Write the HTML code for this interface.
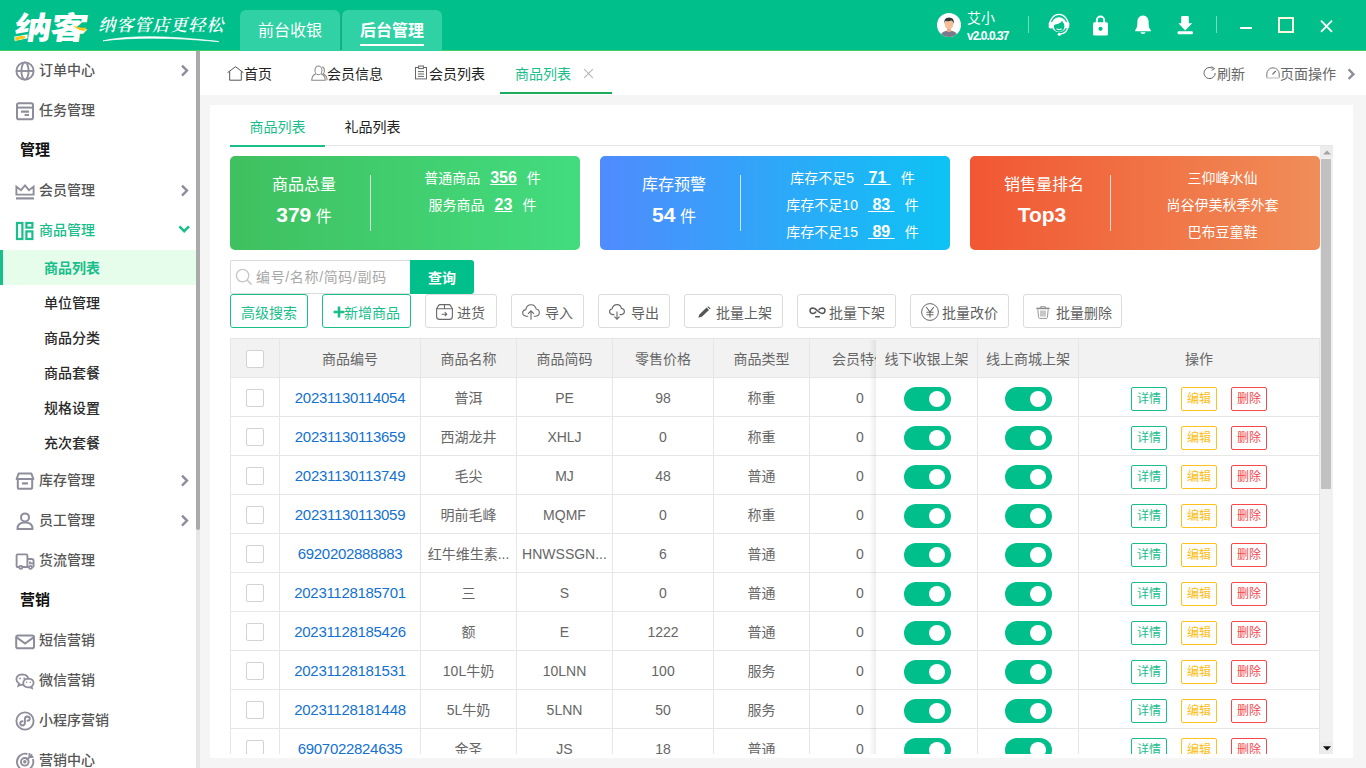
<!DOCTYPE html>
<html lang="zh-CN">
<head>
<meta charset="utf-8">
<title>纳客 - 商品列表</title>
<style>
*{box-sizing:border-box;margin:0;padding:0}
html,body{width:1366px;height:768px;overflow:hidden;background:#f5f5f5;font-family:"Liberation Sans","Noto Sans CJK SC",sans-serif;font-size:14px;color:#333}
a{text-decoration:none;color:inherit}
svg{display:block}
.abs{position:absolute}
/* ---------- top bar ---------- */
#top{position:absolute;left:0;top:0;width:1366px;height:51px;background:#00bf8b;border-bottom:1px solid #41cf66;color:#fff}
#logo{position:absolute;left:12px;top:7px;font-family:"Noto Sans CJK SC","Liberation Sans",sans-serif;font-weight:900;font-size:31px;line-height:38px;letter-spacing:-1px;color:#fff;transform:skewX(-9deg) scaleX(1.205);transform-origin:0 100%;white-space:nowrap}
#slogan{position:absolute;left:100px;top:11px;font-family:"Noto Serif CJK SC","Liberation Serif",serif;font-weight:600;font-size:17px;line-height:26px;letter-spacing:1px;color:#fff;transform:skewX(-14deg);white-space:nowrap}
.ttab{position:absolute;top:10px;height:41px;width:100px;background:#30d1a5;border-radius:6px 6px 0 0;text-align:center;font-size:16px;line-height:42px;color:#fff}
.ttab.on{font-weight:bold}
.ttab.on i{position:absolute;left:18px;top:34px;width:64px;height:2px;background:#fff}
#user{position:absolute;left:937px;top:13px;width:24px;height:24px}
#uname{position:absolute;left:967px;top:9px;font-size:14px;line-height:18px;color:#fff}
#uver{position:absolute;left:967px;top:28px;font-size:12px;line-height:16px;font-weight:bold;letter-spacing:-0.95px;color:#fff}
.tsep{position:absolute;top:16px;width:1px;height:17px;background:rgba(255,255,255,.45)}
.tico{position:absolute;top:13px;width:24px;height:24px}
/* ---------- sidebar ---------- */
#side{position:absolute;left:0;top:51px;width:196px;height:717px;background:#fff;overflow:hidden}
#sbar{position:absolute;left:196px;top:51px;width:4px;height:717px;background:#e6e6e6}
#sbar i{position:absolute;left:0;top:0;width:4px;height:479px;background:#aaa;border-radius:0 0 2px 2px}
.mi{position:absolute;left:0;width:196px;height:40px;line-height:40px;font-size:14px;font-weight:500;color:#555;padding-left:39px}
.mi svg.ic{position:absolute;left:14px;top:10px;width:22px;height:22px}
.mi svg.ch{position:absolute;left:178px;top:13px;width:12px;height:14px}
.mh{position:absolute;left:20px;height:40px;line-height:40px;font-size:15px;font-weight:bold;color:#111}
.mi.g{color:#19be8b}
.si{position:absolute;left:0;width:196px;height:35px;line-height:37px;font-size:14px;font-weight:500;color:#2a2a2a;padding-left:44px}
.si.on{background:#e7fdec;font-weight:bold;color:#19be8b;border-left:3px solid #19be8b;padding-left:41px}

/* ---------- page tabs ---------- */
#tabs{position:absolute;left:200px;top:51px;width:1166px;height:44px;background:#fff;font-size:14px;color:#222}
#tabs .t{position:absolute;top:0;height:44px;line-height:47px;white-space:nowrap}
#tabs .t svg{position:absolute;top:14px}
#tabs .on{color:#19be8b}
#tabs .ul{position:absolute;left:300px;top:41px;width:112px;height:2px;background:#1daa5a}
#tabs .r{color:#666;line-height:47px}
/* ---------- card ---------- */
#card{position:absolute;left:210px;top:105px;width:1143px;height:653px;background:#fff}
#itabs{position:absolute;left:20px;top:0;width:1103px;height:41px;border-bottom:1px solid #e6e6e6;font-size:14px}
#itabs span{position:absolute;top:0;height:42px;line-height:44px;text-align:center;width:95px}
#itabs .on{color:#19be8b;border-bottom:2px solid #19be8b}
#scroll{position:absolute;left:20px;top:41px;width:1090px;height:608px;overflow:hidden}
#vbar{position:absolute;left:1110px;top:41px;width:13px;height:608px;background:#f1f1f1}
#vbar .b{position:absolute;left:0;width:13px;height:12px;background:#ececec}
#vbar .th{position:absolute;left:1px;top:13px;width:10px;height:330px;background:#c1c1c1}
.stat{position:absolute;top:10px;width:350px;height:94px;border-radius:5px;color:#fff}
.stat .l{position:absolute;left:0;top:0;width:148px;text-align:center}
.stat .l b{display:block;font-weight:normal;font-size:16px;line-height:22px;margin-top:18px}
.stat .l em{display:block;font-style:normal;font-size:16px;line-height:30px;margin-top:4px}
.stat .l em strong{font-size:21px;font-weight:bold}
.stat .dv{position:absolute;left:140px;top:19px;width:1px;height:56px;background:rgba(255,255,255,.75)}
.stat .r{position:absolute;left:155px;top:9px;width:195px;text-align:center;font-size:14px;line-height:26.8px;white-space:nowrap}
.stat .r u{font-weight:bold;font-size:16px;margin:0 10px}

/* ---------- tools ---------- */
#sbox{position:absolute;left:0;top:114px;width:180px;height:34px;border:1px solid #dcdcdc;border-right:0;border-radius:2px 0 0 2px;background:#fff;padding-left:25px;line-height:32px;font-size:14px;letter-spacing:.65px;color:#a8a8a8;white-space:nowrap}
#sbox svg{position:absolute;left:4px;top:7px}
#sbtn{position:absolute;left:180px;top:114px;width:64px;height:34px;background:#00bf8b;color:#fff;font-weight:bold;font-size:14px;line-height:36px;text-align:center;border-radius:0 3px 3px 0}
.btn{position:absolute;top:148px;height:34px;border:1px solid #dcdcdc;border-radius:3px;background:#fff;font-size:14px;line-height:36px;color:#5f5f5f;white-space:nowrap}
.btn svg{position:absolute}
.btn span{position:absolute;top:0}
.btn.g{border-color:#19be8b;color:#19be8b;text-align:center}
/* ---------- table ---------- */
#tb{position:absolute;left:0;top:192px;width:1090px;height:430px;border-left:1px solid #e6e6e6;border-top:1px solid #e6e6e6;font-size:14px;color:#666}
.tr{position:absolute;left:0;width:1089px;height:39px;border-bottom:1px solid #e6e6e6}
.tr.h{background:#f2f2f2}
.td{position:absolute;top:0;height:38px;line-height:40px;text-align:center;border-right:1px solid #e6e6e6;white-space:nowrap;overflow:hidden}
.td a{color:#1271d1;font-size:15px;letter-spacing:-.3px}
.cb{position:absolute;left:15px;top:11px;width:18px;height:18px;border:1px solid #d2d2d2;border-radius:2px;background:#fff}
#fix{position:absolute;left:646px;top:192px;width:444px;height:430px;background:#fff;border-top:1px solid #e6e6e6;font-size:14px;color:#666}
#fix:before{content:"";position:absolute;left:-7px;top:1px;width:7px;height:430px;background:linear-gradient(90deg,rgba(0,0,0,0),rgba(0,0,0,.07))}
#fix .tr{width:444px}
.sw{position:absolute;left:27px;top:9px;width:47px;height:24px;border-radius:12px;background:#00bf8b}
.sw i{position:absolute;left:25px;top:4px;width:16px;height:16px;border-radius:8px;background:#fff}
.ab{position:absolute;top:9px;width:36px;height:24px;border:1px solid;border-radius:2px;font-size:12px;line-height:23px;text-align:center}
.ab.d{left:52px;color:#19be8b;border-color:#19be8b}
.ab.e{left:102px;color:#fbbd12;border-color:#ffc21c}
.ab.x{left:152px;color:#f4484c;border-color:#f5494d}
</style>
</head>
<body>
<div id="top">
  <div id="logo">纳客</div>
  <svg class="abs" style="left:12px;top:24px" width="80" height="20" viewBox="0 0 80 20"><path d="M3 13.4 Q8 11.4 13.6 12.2 L12.8 14.4 Q8 14.6 3.6 17.2 Z" fill="#fcc419"/><path d="M61.4 1.6 Q67 4.6 74 3.4 L73.2 6.6 Q66.4 7.6 61.4 1.6 Z" fill="#fcc419"/></svg>
  <div id="slogan">纳客管店更轻松</div>
  <svg class="abs" style="left:100px;top:33px" width="125" height="12" viewBox="0 0 125 12"><path d="M3 7.8 Q42 -0.8 119 8.6 Q48 2.2 3 7.8 Z" fill="#fff" stroke="#fff" stroke-width=".7"/></svg>
  <div class="ttab" style="left:240px">前台收银</div>
  <i class="abs" style="left:340px;top:12px;width:2px;height:38px;background:linear-gradient(90deg,#1bb88c,#0fa77b)"></i>
  <div class="ttab on" style="left:342px">后台管理<i></i></div>
  <svg id="user" viewBox="0 0 24 24"><defs><clipPath id="uc"><circle cx="12" cy="12" r="12"/></clipPath></defs><g clip-path="url(#uc)"><rect width="24" height="24" fill="#fff"/><path d="M3 24 Q4 17.5 12 17.5 Q20 17.5 21 24 Z" fill="#7b7a8b"/><rect x="10.2" y="14" width="3.6" height="5" fill="#eaa27f"/><ellipse cx="12" cy="11.2" rx="4.3" ry="5" fill="#f7bd98"/><path d="M7.2 11 Q6.6 4.6 12 4.6 Q17.6 4.6 16.8 11 Q16 8.2 14.6 7.6 Q11 9 8.6 7.8 Q7.6 8.6 7.2 11 Z" fill="#33363b"/></g></svg>
  <div id="uname">艾小</div>
  <div id="uver">v2.0.0.37</div>
  <i class="tsep" style="left:1028px"></i>
  <svg class="tico" style="left:1047px" viewBox="0 0 24 24"><path d="M2.8 12 A9.2 10.6 0 0 1 21.2 12" fill="none" stroke="#fff" stroke-width="1.3"/><circle cx="12" cy="11.7" r="7.5" fill="#fff"/><rect x="1.7" y="8.8" width="3.8" height="6.6" rx="1.6" fill="#fff"/><rect x="18.5" y="8.8" width="3.8" height="6.6" rx="1.6" fill="#fff"/><path d="M6.9 13.4 Q6.8 11.6 8.4 11.4 Q11.6 11.4 13.6 9.6 Q14.6 8.8 14.8 7.8 Q17.6 10.4 17.4 14 Q16.6 18.7 12.2 18.7 Q7.4 18.5 6.9 13.4 Z" fill="#00bf8b"/><path d="M9.6 16 Q12.2 17.6 14.8 16 Q12.2 16.9 9.6 16 Z" fill="#fff" stroke="#fff" stroke-width=".7"/><path d="M20.6 15 Q19.4 20.2 13.4 21.2" fill="none" stroke="#fff" stroke-width="1.2"/><ellipse cx="12.3" cy="21.4" rx="1.7" ry="1.3" fill="#fff"/></svg>
  <svg class="tico" style="left:1088px" viewBox="0 0 24 24"><path d="M8.8 10 V7.2 A3.7 3.7 0 0 1 16.2 7.2 V10" fill="none" stroke="#fff" stroke-width="1.9"/><rect x="5" y="9.2" width="15" height="13.4" rx="1.5" fill="#fff"/><circle cx="12.5" cy="15.8" r="2.1" fill="#00bf8b"/></svg>
  <svg class="tico" style="left:1131px" viewBox="0 0 24 24"><path d="M12 2.6 C15.8 2.6 17.6 5.6 17.6 9.2 C17.6 14 18.6 15.6 19.8 17 V18.2 H4.2 V17 C5.4 15.6 6.4 14 6.4 9.2 C6.4 5.6 8.2 2.6 12 2.6 Z" fill="#fff"/><path d="M9.4 19.2 H14.6 Q14.2 21 12 21 Q9.8 21 9.4 19.2 Z" fill="#fff"/></svg>
  <svg class="tico" style="left:1173px" viewBox="0 0 24 24"><path d="M9.2 2.9 H14.8 Q15.8 2.9 15.8 3.9 V10.3 H19.2 L12.2 17.4 L5.4 10.3 H8.2 V3.9 Q8.2 2.9 9.2 2.9 Z" fill="#fff"/><rect x="4.6" y="18.3" width="15.3" height="2.9" rx="1" fill="#fff"/></svg>
  <i class="tsep" style="left:1216px"></i>
  <i class="abs" style="left:1240px;top:27px;width:12px;height:2px;background:#fff"></i>
  <i class="abs" style="left:1278px;top:17px;width:16px;height:16px;border:2px solid #fbfbdc"></i>
  <svg class="abs" style="left:1319px;top:19px" width="15" height="15" viewBox="0 0 15 15"><path d="M2 1.6 L13 12.8 M13 1.6 L2 12.8" stroke="#fff" stroke-width="1.8" fill="none"/></svg>
</div>
<div id="side">
  <div class="mi" style="top:-1px"><svg class="ic" viewBox="0 0 22 22"><g fill="none" stroke="#8d8d9c" stroke-width="1.9"><circle cx="11" cy="11" r="8.6"/><ellipse cx="11" cy="11" rx="3.6" ry="8.6"/><path d="M2.4 11 H19.6"/></g></svg>订单中心<svg class="ch" viewBox="0 0 12 14"><path d="M4 2.6 L9 7.6 L4 12.6" fill="none" stroke="#8d8d9c" stroke-width="2.4"/></svg></div>
  <div class="mi" style="top:39px"><svg class="ic" viewBox="0 0 22 22"><g fill="none" stroke="#8d8d9c" stroke-width="2"><rect x="3" y="3.2" width="16" height="16" rx="1.8"/><path d="M3 7.6 H19"/><path d="M7 11.6 H15 M10.6 15 H15" stroke-width="2.2"/></g></svg>任务管理</div>
  <div class="mh" style="top:79px">管理</div>
  <div class="mi" style="top:119px"><svg class="ic" viewBox="0 0 22 22"><g fill="none" stroke="#8d8d9c" stroke-width="1.9"><path d="M2.4 14.6 V6.6 L7 10.2 L11 5.4 L15 10.2 L19.6 6.6 V14.6 Z" stroke-linejoin="miter"/><path d="M2 18.4 H20" stroke-width="2.2"/></g></svg>会员管理<svg class="ch" viewBox="0 0 12 14"><path d="M4 2.6 L9 7.6 L4 12.6" fill="none" stroke="#8d8d9c" stroke-width="2.4"/></svg></div>
  <div class="mi g" style="top:159px"><svg class="ic" viewBox="0 0 22 22"><g fill="none" stroke="#19be8b" stroke-width="2.2"><rect x="3" y="3" width="5.4" height="16"/><rect x="12.4" y="3" width="6" height="4.6"/><rect x="12.4" y="11.4" width="6" height="7.6"/></g></svg>商品管理<svg class="ch" viewBox="0 0 12 14"><path d="M1.4 3.4 L6.2 8.2 L11 3.4" fill="none" stroke="#19be8b" stroke-width="2.5"/></svg></div>
  <div class="si on" style="top:199px">商品列表</div>
  <div class="si" style="top:234px">单位管理</div>
  <div class="si" style="top:269px">商品分类</div>
  <div class="si" style="top:304px">商品套餐</div>
  <div class="si" style="top:339px">规格设置</div>
  <div class="si" style="top:374px">充次套餐</div>
  <div class="mi" style="top:409px"><svg class="ic" viewBox="0 0 22 22"><g fill="none" stroke="#8d8d9c" stroke-width="2"><path d="M2.6 9 L4.6 3.6 H17.4 L19.4 9 Z" stroke-linejoin="round"/><path d="M3.8 9 V17.2 Q3.8 18.8 5.4 18.8 H16.6 Q18.2 18.8 18.2 17.2 V9"/><path d="M8 13.4 H14" stroke-width="2.2"/></g></svg>库存管理<svg class="ch" viewBox="0 0 12 14"><path d="M4 2.6 L9 7.6 L4 12.6" fill="none" stroke="#8d8d9c" stroke-width="2.4"/></svg></div>
  <div class="mi" style="top:449px"><svg class="ic" viewBox="0 0 22 22"><g fill="none" stroke="#8d8d9c" stroke-width="2"><circle cx="11" cy="7.4" r="4"/><path d="M3.4 19 Q3.6 12.6 11 12.6 Q18.4 12.6 18.6 19 Z" stroke-linejoin="round"/></g></svg>员工管理<svg class="ch" viewBox="0 0 12 14"><path d="M4 2.6 L9 7.6 L4 12.6" fill="none" stroke="#8d8d9c" stroke-width="2.4"/></svg></div>
  <div class="mi" style="top:489px"><svg class="ic" viewBox="0 0 22 22"><g fill="none" stroke="#8d8d9c" stroke-width="1.9"><path d="M5 17 H3.6 Q2.6 17 2.6 16 V5.4 Q2.6 4.4 3.6 4.4 H12.4 Q13.4 4.4 13.4 5.4 V17 H8.6"/><path d="M13.4 9 H17.6 Q19.6 9 19.6 11 V16 Q19.6 17 18.6 17 H18.4 M13.4 17 H14.6"/><circle cx="6.8" cy="17.4" r="1.5"/><circle cx="16.5" cy="17.4" r="1.5"/><path d="M16 11.4 V13.4 H19"/></g></svg>货流管理</div>
  <div class="mh" style="top:529px">营销</div>
  <div class="mi" style="top:569px"><svg class="ic" viewBox="0 0 22 22"><g fill="none" stroke="#8d8d9c" stroke-width="2"><rect x="2.2" y="5.6" width="17.8" height="12.6" rx="1.8"/><path d="M3 7.6 L11.1 13.6 L19.2 7.6"/></g></svg>短信营销</div>
  <div class="mi" style="top:609px"><svg class="ic" viewBox="0 0 22 22"><g fill="none" stroke="#8d8d9c" stroke-width="1.8"><path d="M9.6 14.8 Q8.2 15 6.8 14.6 L4.4 15.8 L5 13.6 Q2.4 11.8 2.4 9.2 Q2.4 4.8 8.2 4.4 Q13.4 4.6 14.2 8.4"/><path d="M14.4 8.6 Q19.6 9 19.6 13 Q19.6 15 17.6 16.4 L18 18.2 L16 17.2 Q15 17.5 14.2 17.4 Q9.2 17 9.2 13 Q9.4 9 14.4 8.6 Z"/></g><g fill="#8d8d9c"><circle cx="6" cy="8.4" r=".9"/><circle cx="10.2" cy="8.4" r=".9"/><circle cx="12.6" cy="12.2" r=".8"/><circle cx="16.2" cy="12.2" r=".8"/></g></svg>微信营销</div>
  <div class="mi" style="top:649px"><svg class="ic" viewBox="0 0 22 22"><g fill="none" stroke="#8d8d9c" stroke-width="1.9"><circle cx="11" cy="11" r="8.6"/><path d="M8.6 11.3 Q6.3 11.3 6.2 13.4 Q6.4 15.5 8.5 15.5 Q10.7 15.4 10.9 13.2 V8.8 Q11.1 6.6 13.4 6.5 Q15.7 6.6 15.8 8.7 Q15.7 10.7 13.5 10.8" stroke-linecap="round"/></g></svg>小程序营销</div>
  <div class="mi" style="top:689px"><svg class="ic" viewBox="0 0 22 22"><g fill="none" stroke="#8d8d9c" stroke-width="1.9"><path d="M18.8 9 A8.2 8.2 0 1 1 13.4 4"/><circle cx="10.8" cy="11.8" r="3.8"/><circle cx="10.8" cy="11.8" r=".8" fill="#8d8d9c"/><path d="M12.6 10 L18.2 4.4 M15.4 3 V7 H19.4" stroke-width="1.8"/></g></svg>营销中心</div>
</div>
<div id="sbar"><i></i></div>
<div id="main">
<div id="tabs">
  <div class="t" style="left:28px;padding-left:16px"><svg style="left:-1.4px;top:15.2px" width="17" height="15" viewBox="0 0 17 15"><path d="M0.6 6.7 L8.5 0.7 L16.4 6.7 M2.7 5.4 V14.2 H14.3 V5.4" fill="none" stroke="#555" stroke-width="1"/></svg>首页</div>
  <div class="t" style="left:111px;padding-left:16px"><svg style="left:-0.4px;top:14px" width="17" height="16.5" viewBox="0 0 16 15"><g fill="none" stroke="#888" stroke-width=".95"><ellipse cx="7" cy="4.8" rx="3.3" ry="4.1"/><path d="M4.6 8 Q0.8 9.4 0.7 14.2 H13.4 Q13.4 9.4 9.4 8"/><path d="M10.6 1.4 Q12.8 2.4 12.6 5.6 Q12.4 7.4 11.4 8.2 Q15.2 9.6 15.2 14.2"/></g></svg>会员信息</div>
  <div class="t" style="left:214px;padding-left:15px"><svg style="left:0" width="14" height="15" viewBox="0 0 14 15"><g fill="none" stroke="#666" stroke-width="1"><rect x="1.5" y="2.5" width="11" height="11.4"/><rect x="4.6" y="1" width="4.8" height="2.6" fill="#fff"/><path d="M4 6.6 H10 M4 9 H10 M4 11.4 H10"/></g></svg>会员列表</div>
  <div class="t on" style="left:315px">商品列表</div>
  <svg class="abs" style="left:383px;top:17px" width="11" height="11" viewBox="0 0 11 11"><path d="M1.2 1.2 L9.8 9.8 M9.8 1.2 L1.2 9.8" stroke="#b5b5b5" stroke-width="1.1" fill="none"/></svg>
  <i class="ul"></i>
  <div class="t r" style="left:1003px;padding-left:14px"><svg style="left:0;top:15px" width="14" height="14" viewBox="0 0 14 14"><path d="M12.2 7 A5.6 5.6 0 1 1 9.4 2.2" fill="none" stroke="#666" stroke-width="1"/><path d="M8.4 0.6 L11.6 2.6 L8.6 4.4" fill="none" stroke="#666" stroke-width="1"/></svg>刷新</div>
  <div class="t r" style="left:1066px;padding-left:14px"><svg style="left:0;top:15px" width="14" height="14" viewBox="0 0 14 14"><path d="M0.8 11.6 V8 A6.2 6.2 0 0 1 13.2 8 V11.6" fill="none" stroke="#777" stroke-width="1"/><path d="M0.8 12 H13.2" stroke="#ccc" stroke-width="1.4"/><path d="M6.4 8.4 L9.8 5" stroke="#666" stroke-width="1.1"/></svg>页面操作</div>
  <svg class="abs" style="left:1146px;top:16px" width="10" height="14" viewBox="0 0 10 14"><path d="M2.6 2.4 L7.4 7.2 L2.6 12" fill="none" stroke="#8d8d9c" stroke-width="2.4"/></svg>
</div>
<div id="card">
  <div id="itabs"><span class="on" style="left:0">商品列表</span><span style="left:95px;color:#222">礼品列表</span></div>
  <div id="scroll">
    <div class="stat" style="left:0;background:linear-gradient(90deg,#40c05f,#42dc7f)">
      <div class="l"><b>商品总量</b><em><strong>379</strong> 件</em></div><i class="dv"></i>
      <div class="r">普通商品<u>356</u>件<br>服务商品<u>23</u>件</div>
    </div>
    <div class="stat" style="left:370px;background:linear-gradient(90deg,#508bfd,#0dc3f4)">
      <div class="l"><b>库存预警</b><em><strong>54</strong> 件</em></div><i class="dv"></i>
      <div class="r">库存不足5<u>&nbsp;71&nbsp;</u>件<br>库存不足10<u>&nbsp;83&nbsp;</u>件<br>库存不足15<u>&nbsp;89&nbsp;</u>件</div>
    </div>
    <div class="stat" style="left:740px;background:linear-gradient(90deg,#f15732,#f08d58)">
      <div class="l"><b>销售量排名</b><em><strong style="margin-left:-4px">Top3</strong></em></div><i class="dv"></i>
      <div class="r">三仰峰水仙<br>尚谷伊美秋季外套<br>巴布豆童鞋</div>
    </div>
    <div id="sbox"><svg width="18" height="18" viewBox="0 0 18 18"><circle cx="7.6" cy="7.6" r="6.2" fill="none" stroke="#c8c8c8" stroke-width="1.4"/><path d="M12 12 L16.6 16.6" stroke="#c8c8c8" stroke-width="1.6"/></svg>编号/名称/简码/副码</div>
    <div id="sbtn">查询</div>
    <div class="btn g" style="left:0;width:78px">高级搜索</div>
    <div class="btn g" style="left:92px;width:89px"><svg style="left:10px;top:11px" width="12" height="12" viewBox="0 0 12 12"><path d="M6 0.6 V11.4 M0.6 6 H11.4" stroke="#19be8b" stroke-width="2.6"/></svg><span style="left:21px">新增商品</span></div>
    <div class="btn" style="left:195px;width:72px"><svg style="left:10px;top:9px" width="17" height="16" viewBox="0 0 17 16"><g fill="none" stroke="#686868" stroke-width="1.1"><path d="M0.6 4.8 L2.6 1.4 Q3 0.6 4 0.6 H13 Q14 0.6 14.4 1.4 L16.4 4.8 V12.4 Q16.4 15.4 13.4 15.4 H3.6 Q0.6 15.4 0.6 12.4 Z"/><path d="M0.6 4.8 H16.4 M8.5 0.6 V4.8"/><path d="M5.6 10.2 H10.6 M8.8 8.2 L10.8 10.2 L8.8 12.2"/></g></svg><span style="left:31px">进货</span></div>
    <div class="btn" style="left:281px;width:73px"><svg style="left:9.6px;top:8.6px" width="18" height="16" viewBox="0 0 18 16"><g fill="none" stroke="#686868" stroke-width="1.1"><path d="M6.2 12.2 H4.4 Q0.7 12 0.7 8.8 Q0.7 6 3.8 5.6 Q4.6 0.7 9.2 0.7 Q13.2 0.7 14.2 5 Q17.3 5.4 17.3 8.6 Q17.3 12 13.8 12.2 H11.8"/><path d="M9 15.8 V7 M6 9.8 L9 6.8 L12 9.8"/></g></svg><span style="left:33px">导入</span></div>
    <div class="btn" style="left:368px;width:72px"><svg style="left:10.4px;top:9px" width="16" height="16" viewBox="0 0 16 16"><g fill="none" stroke="#686868" stroke-width="1.1"><path d="M5.4 10.6 H3.8 Q0.6 10.4 0.6 7.6 Q0.6 5.2 3.2 4.8 Q4 0.6 8 0.6 Q11.6 0.6 12.4 4.4 Q15.4 4.8 15.4 7.6 Q15.4 10.4 12.2 10.6 H10.6"/><path d="M8 7.6 V15 M5.4 12.6 L8 15.2 L10.6 12.6"/></g></svg><span style="left:32px">导出</span></div>
    <div class="btn" style="left:454px;width:99px"><svg style="left:13px;top:11px" width="13" height="12" viewBox="0 0 13 12"><path d="M0.3 11.8 L1.4 8.4 L8.6 1.6 L11 4 L3.8 10.8 Z" fill="#555"/><path d="M9.4 0.9 L10.2 0.2 L12.6 2.4 L11.8 3.2 Z" fill="#555"/></svg><span style="left:31px">批量上架</span></div>
    <div class="btn" style="left:567px;width:99px"><svg style="left:10.6px;top:12.4px" width="17" height="11" viewBox="0 0 17 11"><g fill="none" stroke="#555" stroke-width="1.5" stroke-linecap="round"><path d="M10.2 2.6 Q11.6 0.9 13.4 0.9 Q16 1 16 3.8 Q15.8 6.6 13.2 6.6 Q11 6.4 8.5 3.8 Q6 1 3.8 0.9 Q1 1 1 3.8 Q1.2 6.6 3.8 6.6 Q5.4 6.6 6.8 5"/><path d="M6.6 9.8 H10.4" stroke-width="1.4"/></g></svg><span style="left:31px">批量下架</span></div>
    <div class="btn" style="left:680px;width:99px"><svg style="left:10px;top:8px" width="18" height="18" viewBox="0 0 18 18"><g fill="none" stroke="#686868" stroke-width="1"><circle cx="9" cy="9" r="8.4"/><path d="M5.2 4 L9 9 L12.8 4 M9 9 V14.6 M5.4 9.2 H12.6 M5.4 11.8 H12.6" stroke-width="1.1"/></g></svg><span style="left:31px">批量改价</span></div>
    <div class="btn" style="left:793px;width:99px"><svg style="left:12.4px;top:11.2px" width="14" height="13" viewBox="0 0 14 13"><g fill="none" stroke="#999"><path d="M0.4 2.4 H13.6" stroke-width="1.5" stroke="#888"/><path d="M4.6 2 V0.7 H9.4 V2" stroke-width="1"/><path d="M1.8 3.4 L2.6 11.4 Q2.7 12.4 3.6 12.4 H10.4 Q11.3 12.4 11.4 11.4 L12.2 3.4" stroke-width="1"/><path d="M5 4.6 V10.6 M7 4.6 V10.6 M9 4.6 V10.6" stroke-width="1.1"/></g></svg><span style="left:32px">批量删除</span></div>
    <div id="tb">
      <div class="tr h" style="top:0"><div class="td" style="left:0px;width:49px"><i class="cb"></i></div><div class="td" style="left:49px;width:141px">商品编号</div><div class="td" style="left:190px;width:96px">商品名称</div><div class="td" style="left:286px;width:96px">商品简码</div><div class="td" style="left:382px;width:101px">零售价格</div><div class="td" style="left:483px;width:96px">商品类型</div><div class="td" style="left:579px;width:101px">会员特价</div></div>
      <div class="tr" style="top:39px"><div class="td" style="left:0px;width:49px"><i class="cb"></i></div><div class="td" style="left:49px;width:141px"><a>20231130114054</a></div><div class="td" style="left:190px;width:96px">普洱</div><div class="td" style="left:286px;width:96px">PE</div><div class="td" style="left:382px;width:101px">98</div><div class="td" style="left:483px;width:96px">称重</div><div class="td" style="left:579px;width:101px">0</div></div>
      <div class="tr" style="top:78px"><div class="td" style="left:0px;width:49px"><i class="cb"></i></div><div class="td" style="left:49px;width:141px"><a>20231130113659</a></div><div class="td" style="left:190px;width:96px">西湖龙井</div><div class="td" style="left:286px;width:96px">XHLJ</div><div class="td" style="left:382px;width:101px">0</div><div class="td" style="left:483px;width:96px">称重</div><div class="td" style="left:579px;width:101px">0</div></div>
      <div class="tr" style="top:117px"><div class="td" style="left:0px;width:49px"><i class="cb"></i></div><div class="td" style="left:49px;width:141px"><a>20231130113749</a></div><div class="td" style="left:190px;width:96px">毛尖</div><div class="td" style="left:286px;width:96px">MJ</div><div class="td" style="left:382px;width:101px">48</div><div class="td" style="left:483px;width:96px">普通</div><div class="td" style="left:579px;width:101px">0</div></div>
      <div class="tr" style="top:156px"><div class="td" style="left:0px;width:49px"><i class="cb"></i></div><div class="td" style="left:49px;width:141px"><a>20231130113059</a></div><div class="td" style="left:190px;width:96px">明前毛峰</div><div class="td" style="left:286px;width:96px">MQMF</div><div class="td" style="left:382px;width:101px">0</div><div class="td" style="left:483px;width:96px">称重</div><div class="td" style="left:579px;width:101px">0</div></div>
      <div class="tr" style="top:195px"><div class="td" style="left:0px;width:49px"><i class="cb"></i></div><div class="td" style="left:49px;width:141px"><a>6920202888883</a></div><div class="td" style="left:190px;width:96px">红牛维生素...</div><div class="td" style="left:286px;width:96px">HNWSSGN...</div><div class="td" style="left:382px;width:101px">6</div><div class="td" style="left:483px;width:96px">普通</div><div class="td" style="left:579px;width:101px">0</div></div>
      <div class="tr" style="top:234px"><div class="td" style="left:0px;width:49px"><i class="cb"></i></div><div class="td" style="left:49px;width:141px"><a>20231128185701</a></div><div class="td" style="left:190px;width:96px">三</div><div class="td" style="left:286px;width:96px">S</div><div class="td" style="left:382px;width:101px">0</div><div class="td" style="left:483px;width:96px">普通</div><div class="td" style="left:579px;width:101px">0</div></div>
      <div class="tr" style="top:273px"><div class="td" style="left:0px;width:49px"><i class="cb"></i></div><div class="td" style="left:49px;width:141px"><a>20231128185426</a></div><div class="td" style="left:190px;width:96px">额</div><div class="td" style="left:286px;width:96px">E</div><div class="td" style="left:382px;width:101px">1222</div><div class="td" style="left:483px;width:96px">普通</div><div class="td" style="left:579px;width:101px">0</div></div>
      <div class="tr" style="top:312px"><div class="td" style="left:0px;width:49px"><i class="cb"></i></div><div class="td" style="left:49px;width:141px"><a>20231128181531</a></div><div class="td" style="left:190px;width:96px">10L牛奶</div><div class="td" style="left:286px;width:96px">10LNN</div><div class="td" style="left:382px;width:101px">100</div><div class="td" style="left:483px;width:96px">服务</div><div class="td" style="left:579px;width:101px">0</div></div>
      <div class="tr" style="top:351px"><div class="td" style="left:0px;width:49px"><i class="cb"></i></div><div class="td" style="left:49px;width:141px"><a>20231128181448</a></div><div class="td" style="left:190px;width:96px">5L牛奶</div><div class="td" style="left:286px;width:96px">5LNN</div><div class="td" style="left:382px;width:101px">50</div><div class="td" style="left:483px;width:96px">服务</div><div class="td" style="left:579px;width:101px">0</div></div>
      <div class="tr" style="top:390px"><div class="td" style="left:0px;width:49px"><i class="cb"></i></div><div class="td" style="left:49px;width:141px"><a>6907022824635</a></div><div class="td" style="left:190px;width:96px">金圣</div><div class="td" style="left:286px;width:96px">JS</div><div class="td" style="left:382px;width:101px">18</div><div class="td" style="left:483px;width:96px">普通</div><div class="td" style="left:579px;width:101px">0</div></div>
      <div class="tr" style="top:429px"><div class="td" style="left:0px;width:49px"><i class="cb"></i></div><div class="td" style="left:49px;width:141px"><a>6901028075831</a></div><div class="td" style="left:190px;width:96px">利群</div><div class="td" style="left:286px;width:96px">LQ</div><div class="td" style="left:382px;width:101px">22</div><div class="td" style="left:483px;width:96px">普通</div><div class="td" style="left:579px;width:101px">0</div></div>
    </div>
    <div id="fix">
      <div class="tr h" style="top:0"><div class="td" style="left:0px;width:102px">线下收银上架</div><div class="td" style="left:102px;width:101px">线上商城上架</div><div class="td" style="left:203px;width:241px">操作</div></div>
      <div class="tr" style="top:39px"><div class="td" style="left:0px;width:102px"><span class="sw" style="left:28px"><i></i></span></div><div class="td" style="left:102px;width:101px"><span class="sw"><i></i></span></div><div class="td" style="left:203px;width:241px"><span class="ab d">详情</span><span class="ab e">编辑</span><span class="ab x">删除</span></div></div>
      <div class="tr" style="top:78px"><div class="td" style="left:0px;width:102px"><span class="sw" style="left:28px"><i></i></span></div><div class="td" style="left:102px;width:101px"><span class="sw"><i></i></span></div><div class="td" style="left:203px;width:241px"><span class="ab d">详情</span><span class="ab e">编辑</span><span class="ab x">删除</span></div></div>
      <div class="tr" style="top:117px"><div class="td" style="left:0px;width:102px"><span class="sw" style="left:28px"><i></i></span></div><div class="td" style="left:102px;width:101px"><span class="sw"><i></i></span></div><div class="td" style="left:203px;width:241px"><span class="ab d">详情</span><span class="ab e">编辑</span><span class="ab x">删除</span></div></div>
      <div class="tr" style="top:156px"><div class="td" style="left:0px;width:102px"><span class="sw" style="left:28px"><i></i></span></div><div class="td" style="left:102px;width:101px"><span class="sw"><i></i></span></div><div class="td" style="left:203px;width:241px"><span class="ab d">详情</span><span class="ab e">编辑</span><span class="ab x">删除</span></div></div>
      <div class="tr" style="top:195px"><div class="td" style="left:0px;width:102px"><span class="sw" style="left:28px"><i></i></span></div><div class="td" style="left:102px;width:101px"><span class="sw"><i></i></span></div><div class="td" style="left:203px;width:241px"><span class="ab d">详情</span><span class="ab e">编辑</span><span class="ab x">删除</span></div></div>
      <div class="tr" style="top:234px"><div class="td" style="left:0px;width:102px"><span class="sw" style="left:28px"><i></i></span></div><div class="td" style="left:102px;width:101px"><span class="sw"><i></i></span></div><div class="td" style="left:203px;width:241px"><span class="ab d">详情</span><span class="ab e">编辑</span><span class="ab x">删除</span></div></div>
      <div class="tr" style="top:273px"><div class="td" style="left:0px;width:102px"><span class="sw" style="left:28px"><i></i></span></div><div class="td" style="left:102px;width:101px"><span class="sw"><i></i></span></div><div class="td" style="left:203px;width:241px"><span class="ab d">详情</span><span class="ab e">编辑</span><span class="ab x">删除</span></div></div>
      <div class="tr" style="top:312px"><div class="td" style="left:0px;width:102px"><span class="sw" style="left:28px"><i></i></span></div><div class="td" style="left:102px;width:101px"><span class="sw"><i></i></span></div><div class="td" style="left:203px;width:241px"><span class="ab d">详情</span><span class="ab e">编辑</span><span class="ab x">删除</span></div></div>
      <div class="tr" style="top:351px"><div class="td" style="left:0px;width:102px"><span class="sw" style="left:28px"><i></i></span></div><div class="td" style="left:102px;width:101px"><span class="sw"><i></i></span></div><div class="td" style="left:203px;width:241px"><span class="ab d">详情</span><span class="ab e">编辑</span><span class="ab x">删除</span></div></div>
      <div class="tr" style="top:390px"><div class="td" style="left:0px;width:102px"><span class="sw" style="left:28px"><i></i></span></div><div class="td" style="left:102px;width:101px"><span class="sw"><i></i></span></div><div class="td" style="left:203px;width:241px"><span class="ab d">详情</span><span class="ab e">编辑</span><span class="ab x">删除</span></div></div>
      <div class="tr" style="top:429px"><div class="td" style="left:0px;width:102px"><span class="sw" style="left:28px"><i></i></span></div><div class="td" style="left:102px;width:101px"><span class="sw"><i></i></span></div><div class="td" style="left:203px;width:241px"><span class="ab d">详情</span><span class="ab e">编辑</span><span class="ab x">删除</span></div></div>
    </div>
  </div>
  <div id="vbar"><i class="b" style="top:0"></i><svg class="abs" style="left:3px;top:4px" width="8" height="5" viewBox="0 0 8 5"><path d="M0 4.6 L4 0.4 L8 4.6 Z" fill="#a3a3a3"/></svg><i class="th"></i><i class="b" style="top:596px"></i><svg class="abs" style="left:3px;top:600px" width="8" height="5" viewBox="0 0 8 5"><path d="M0 0.2 H8 L4 4.6 Z" fill="#111"/></svg></div>
</div>
</div>
</body>
</html>
